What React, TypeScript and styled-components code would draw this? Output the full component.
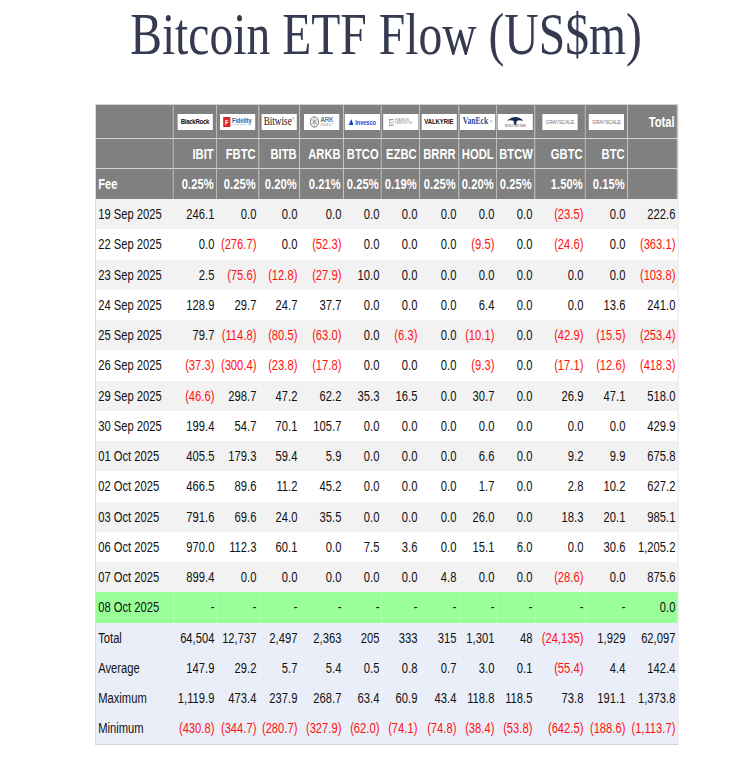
import React from "react";
import styled, { createGlobalStyle } from "styled-components";

const GlobalStyle = createGlobalStyle`
  html, body {
    margin: 0;
    padding: 0;
    background: #ffffff;
    overflow: hidden;
  }
  body {
    font-family: "Liberation Sans", Arial, sans-serif;
  }
`;

// the source page is drawn a little narrower than tall, so the whole sheet is squeezed
const Sheet = styled.div`
  width: 915px;
  transform: scaleX(0.8);
  transform-origin: 0 0;
`;

const Content = styled.div`
  width: 727.5px;
  margin-left: 118.75px;
`;

const Title = styled.h1`
  margin: 0 -40px 35px;
  font-family: "Liberation Serif", "Times New Roman", serif;
  font-weight: normal;
  font-size: 59.5px;
  line-height: normal;
  color: #353a50;
  text-align: center;
`;

const Table = styled.table`
  width: 727.5px;
  table-layout: fixed;
  border-collapse: separate;
  border-spacing: 0;
  border: 1px solid #d4d4d4;
  border-top: none;
  font-size: 14px;
  color: #111;
`;

const HeadRow = styled.tr<{ $h: number }>`
  height: ${p => p.$h}px;
`;

const Th = styled.th<{ $align?: string }>`
  background: #808080;
  color: #ffffff;
  font-weight: bold;
  font-size: 14px;
  text-align: ${p => p.$align || "right"};
  padding: 0 3px;
  border: 1px solid #d4d4d4;
  border-left-width: 0;
  border-bottom-width: 0;
  white-space: nowrap;
  vertical-align: middle;
`;

const LogoCell = styled(Th)`
  text-align: center;
  padding: 0;
`;

const Row = styled.tr<{ $bg: string }>`
  height: 30.25px;
  background: ${p => p.$bg};
`;

const Td = styled.td<{ $neg?: boolean }>`
  text-align: right;
  padding: 0 3px;
  white-space: nowrap;
  color: ${p => (p.$neg ? "#ff1010" : "#111")};
`;

const DateTd = styled.td`
  text-align: left;
  padding: 0 3px;
  white-space: nowrap;
`;

const LogoBox = styled.span<{ $w?: number }>`
  display: inline-flex;
  align-items: center;
  justify-content: center;
  gap: 2px;
  width: ${p => p.$w || 44}px;
  height: 16px;
  background: #ffffff;
  overflow: hidden;
  vertical-align: middle;
  font-weight: normal;
`;

const LogoText = styled.span<{ $size: number; $color?: string; $weight?: string; $serif?: boolean; $ls?: number }>`
  font-family: ${p => (p.$serif ? `"Liberation Serif", "Times New Roman", serif` : `"Liberation Sans", Arial, sans-serif`)};
  font-size: ${p => p.$size}px;
  color: ${p => p.$color || "#111"};
  font-weight: ${p => p.$weight || "bold"};
  letter-spacing: ${p => p.$ls ?? 0}px;
  line-height: 1;
  white-space: nowrap;
`;

const Stack = styled.span<{ $center?: boolean }>`
  display: inline-flex;
  flex-direction: column;
  align-items: ${p => (p.$center ? "center" : "flex-start")};
  line-height: 1;
`;

const Mark = styled.sup`
  font-size: 4px;
`;

const FidelityMark = styled.span`
  display: inline-flex;
  align-items: center;
  justify-content: center;
  width: 9px;
  height: 10px;
  background: #d7262d;
  color: #fff;
  font-size: 7px;
  font-weight: bold;
`;

const BlackRock = () => (
  <LogoBox>
    <LogoText $size={7.5} $ls={-0.3}>BlackRock</LogoText>
  </LogoBox>
);

const Fidelity = () => (
  <LogoBox>
    <FidelityMark>F</FidelityMark>
    <Stack>
      <LogoText $size={7} $color="#2f5d9c">Fidelity</LogoText>
      <LogoText $size={2.5} $color="#6a8fc0" $weight="normal">INVESTMENTS</LogoText>
    </Stack>
  </LogoBox>
);

const Bitwise = () => (
  <LogoBox>
    <LogoText $size={11.5} $serif $weight="normal" $color="#222">
      Bitwise<Mark>®</Mark>
    </LogoText>
  </LogoBox>
);

const Ark = () => (
  <LogoBox>
    <svg width="12" height="12" viewBox="0 0 12 12">
      <circle cx="6" cy="6" r="5.2" fill="none" stroke="#555" strokeWidth="0.8" />
      <path d="M6 1v10M2 4l8 4M2 8l8-4M3 2.5l6 7M9 2.5l-6 7" stroke="#777" strokeWidth="0.5" />
    </svg>
    <Stack>
      <LogoText $size={8} $color="#333" $weight="normal">ARK</LogoText>
      <LogoText $size={3.5} $color="#888" $weight="normal" $ls={0.6}>INVEST</LogoText>
    </Stack>
  </LogoBox>
);

const Invesco = () => (
  <LogoBox>
    <svg width="6" height="6" viewBox="0 0 6 6">
      <path d="M3 0L6 6H0z" fill="#1c3fd0" />
    </svg>
    <LogoText $size={7} $color="#1c3fd0">Invesco</LogoText>
  </LogoBox>
);

const Franklin = () => (
  <LogoBox>
    <svg width="6" height="7" viewBox="0 0 6 7">
      <rect x="0.5" y="0.5" width="5" height="6" fill="none" stroke="#777" strokeWidth="0.7" />
      <path d="M1.5 2h3M1.5 3.5h3M1.5 5h3" stroke="#999" strokeWidth="0.5" />
    </svg>
    <Stack>
      <LogoText $size={3.2} $color="#777" $weight="normal" $ls={0.2}>FRANKLIN</LogoText>
      <LogoText $size={3.2} $color="#777" $weight="normal" $ls={0.2}>TEMPLETON</LogoText>
    </Stack>
  </LogoBox>
);

const Valkyrie = () => (
  <LogoBox>
    <LogoText $size={7.5} $color="#111" $ls={-0.1}>VALKYRIE</LogoText>
  </LogoBox>
);

const VanEck = () => (
  <LogoBox>
    <LogoText $size={9.5} $serif $color="#1f4fa0">VanEck</LogoText>
    <LogoText $size={4} $color="#1f4fa0" $weight="normal">®</LogoText>
  </LogoBox>
);

const WisdomTree = () => (
  <LogoBox>
    <Stack $center>
      <svg width="22" height="9" viewBox="0 0 22 9">
        <path d="M1 5C4 2 8 1 11 1s8 1 10 4c-3-1-6-1-8 0l-1 4h-2l-1-4C7 4 4 4 1 5z" fill="#1e2a56" />
      </svg>
      <LogoText $size={3.6} $color="#555" $weight="normal" $ls={0.2}>WISDOMTREE</LogoText>
    </Stack>
  </LogoBox>
);

const Grayscale = () => (
  <LogoBox>
    <LogoText $size={6} $color="#6f6f6f" $weight="normal" $ls={-0.1}>GRAYSCALE</LogoText>
  </LogoBox>
);

const columns = [
  { ticker: "IBIT", fee: "0.25%", logo: <BlackRock /> },
  { ticker: "FBTC", fee: "0.25%", logo: <Fidelity /> },
  { ticker: "BITB", fee: "0.20%", logo: <Bitwise /> },
  { ticker: "ARKB", fee: "0.21%", logo: <Ark /> },
  { ticker: "BTCO", fee: "0.25%", logo: <Invesco /> },
  { ticker: "EZBC", fee: "0.19%", logo: <Franklin /> },
  { ticker: "BRRR", fee: "0.25%", logo: <Valkyrie /> },
  { ticker: "HODL", fee: "0.20%", logo: <VanEck /> },
  { ticker: "BTCW", fee: "0.25%", logo: <WisdomTree /> },
  { ticker: "GBTC", fee: "1.50%", logo: <Grayscale /> },
  { ticker: "BTC", fee: "0.15%", logo: <Grayscale /> },
];

const widths = [97.5, 53.75, 52.5, 51.25, 55, 47.5, 47.5, 48.75, 47.5, 47.5, 63.75, 52.5, 62.5];

const flows: [string, string[]][] = [
  ["19 Sep 2025", ["246.1", "0.0", "0.0", "0.0", "0.0", "0.0", "0.0", "0.0", "0.0", "(23.5)", "0.0", "222.6"]],
  ["22 Sep 2025", ["0.0", "(276.7)", "0.0", "(52.3)", "0.0", "0.0", "0.0", "(9.5)", "0.0", "(24.6)", "0.0", "(363.1)"]],
  ["23 Sep 2025", ["2.5", "(75.6)", "(12.8)", "(27.9)", "10.0", "0.0", "0.0", "0.0", "0.0", "0.0", "0.0", "(103.8)"]],
  ["24 Sep 2025", ["128.9", "29.7", "24.7", "37.7", "0.0", "0.0", "0.0", "6.4", "0.0", "0.0", "13.6", "241.0"]],
  ["25 Sep 2025", ["79.7", "(114.8)", "(80.5)", "(63.0)", "0.0", "(6.3)", "0.0", "(10.1)", "0.0", "(42.9)", "(15.5)", "(253.4)"]],
  ["26 Sep 2025", ["(37.3)", "(300.4)", "(23.8)", "(17.8)", "0.0", "0.0", "0.0", "(9.3)", "0.0", "(17.1)", "(12.6)", "(418.3)"]],
  ["29 Sep 2025", ["(46.6)", "298.7", "47.2", "62.2", "35.3", "16.5", "0.0", "30.7", "0.0", "26.9", "47.1", "518.0"]],
  ["30 Sep 2025", ["199.4", "54.7", "70.1", "105.7", "0.0", "0.0", "0.0", "0.0", "0.0", "0.0", "0.0", "429.9"]],
  ["01 Oct 2025", ["405.5", "179.3", "59.4", "5.9", "0.0", "0.0", "0.0", "6.6", "0.0", "9.2", "9.9", "675.8"]],
  ["02 Oct 2025", ["466.5", "89.6", "11.2", "45.2", "0.0", "0.0", "0.0", "1.7", "0.0", "2.8", "10.2", "627.2"]],
  ["03 Oct 2025", ["791.6", "69.6", "24.0", "35.5", "0.0", "0.0", "0.0", "26.0", "0.0", "18.3", "20.1", "985.1"]],
  ["06 Oct 2025", ["970.0", "112.3", "60.1", "0.0", "7.5", "3.6", "0.0", "15.1", "6.0", "0.0", "30.6", "1,205.2"]],
  ["07 Oct 2025", ["899.4", "0.0", "0.0", "0.0", "0.0", "0.0", "4.8", "0.0", "0.0", "(28.6)", "0.0", "875.6"]],
];

const today: [string, string[]] = ["08 Oct 2025", ["-", "-", "-", "-", "-", "-", "-", "-", "-", "-", "-", "0.0"]];

const summary: [string, string[]][] = [
  ["Total", ["64,504", "12,737", "2,497", "2,363", "205", "333", "315", "1,301", "48", "(24,135)", "1,929", "62,097"]],
  ["Average", ["147.9", "29.2", "5.7", "5.4", "0.5", "0.8", "0.7", "3.0", "0.1", "(55.4)", "4.4", "142.4"]],
  ["Maximum", ["1,119.9", "473.4", "237.9", "268.7", "63.4", "60.9", "43.4", "118.8", "118.5", "73.8", "191.1", "1,373.8"]],
  ["Minimum", ["(430.8)", "(344.7)", "(280.7)", "(327.9)", "(62.0)", "(74.1)", "(74.8)", "(38.4)", "(53.8)", "(642.5)", "(188.6)", "(1,113.7)"]],
];

const DataRow = ({ label, values, bg }: { label: string; values: string[]; bg: string }) => (
  <Row $bg={bg}>
    <DateTd>{label}</DateTd>
    {values.map((v, i) => (
      <Td key={i} $neg={v.startsWith("(")}>
        {v}
      </Td>
    ))}
  </Row>
);

export default function App() {
  return (
    <>
      <GlobalStyle />
      <Sheet>
        <Content>
          <Title>Bitcoin ETF Flow (US$m)</Title>
          <Table>
            <colgroup>
              {widths.map((w, i) => (
                <col key={i} width={w} />
              ))}
            </colgroup>
            <thead>
              <HeadRow $h={34}>
                <Th />
                {columns.map(c => (
                  <LogoCell key={c.ticker}>{c.logo}</LogoCell>
                ))}
                <Th>Total</Th>
              </HeadRow>
              <HeadRow $h={30}>
                <Th />
                {columns.map(c => (
                  <Th key={c.ticker}>{c.ticker}</Th>
                ))}
                <Th />
              </HeadRow>
              <HeadRow $h={31}>
                <Th $align="left">Fee</Th>
                {columns.map(c => (
                  <Th key={c.ticker}>{c.fee}</Th>
                ))}
                <Th />
              </HeadRow>
            </thead>
            <tbody>
              {flows.map(([d, v], i) => (
                <DataRow key={d} label={d} values={v} bg={i % 2 === 0 ? "#f2f2f2" : "#ffffff"} />
              ))}
              <DataRow label={today[0]} values={today[1]} bg="#99ff99" />
              {summary.map(([d, v]) => (
                <DataRow key={d} label={d} values={v} bg="#eaeef8" />
              ))}
            </tbody>
          </Table>
        </Content>
      </Sheet>
    </>
  );
}
